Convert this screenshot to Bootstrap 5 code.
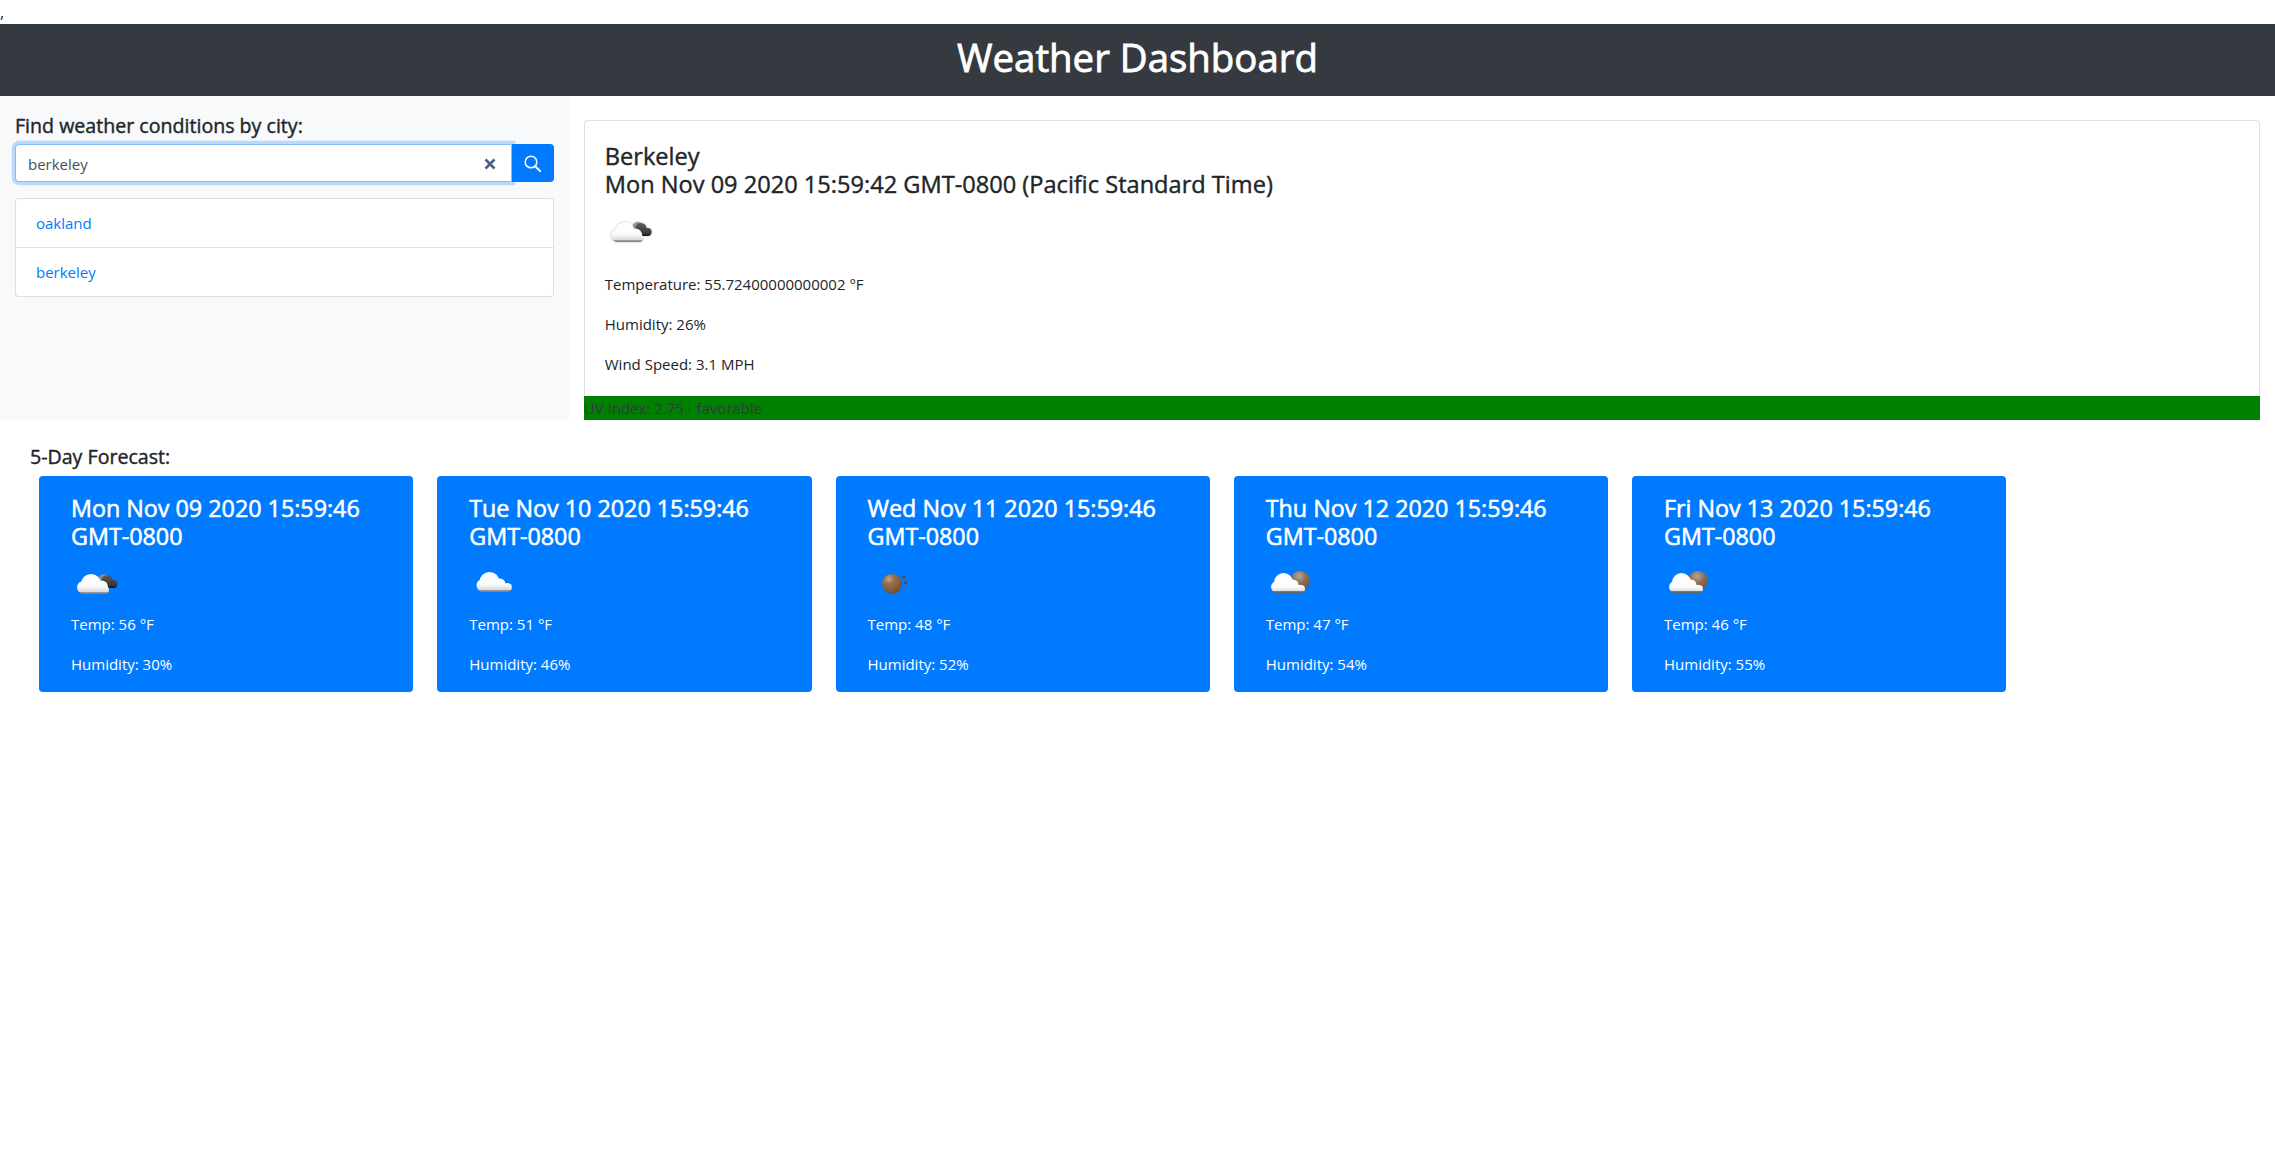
<!doctype html>
<html lang="en">
<head>
<meta charset="utf-8">
<title>Weather Dashboard</title>
<link href="https://cdn.jsdelivr.net/npm/bootstrap@5.3.0/dist/css/bootstrap.min.css" rel="stylesheet">
<style>
body{font-family:"Open Sans","Liberation Sans",sans-serif;font-size:15px;line-height:24px;color:#212529;background:#fff}
.stray{height:24px;font-size:16px;line-height:24px;margin:0}
.top-banner{height:72px;background:#343a40;color:#fff}
.top-banner h1{font-size:38.4px;font-weight:500;line-height:67px;margin:0;-webkit-text-stroke:.8px #fff}
.side-pane{background:#f8f9fa;padding:15px}
.find-label{font-size:19.6px;font-weight:500;line-height:29px;margin:0 0 4px;-webkit-text-stroke:.4px #212529}
.search-wrap{height:38px}
.search-field{position:relative;flex:1 1 auto}
.search-field .form-control{height:38px;border-radius:.25rem 0 0 .25rem;border-color:#80bdff;box-shadow:0 0 0 3.2px rgba(0,123,255,.25);color:#495057;font-size:15px;padding:7px 12px 5px}
.clear-x{position:absolute;right:16px;top:14px;width:12px;height:12px}
.go-btn{width:42px;height:38px;background:#007bff;border:0;border-radius:0 .25rem .25rem 0;padding:0 0 3px;color:#fff}
.city-list{margin-top:16px;border-radius:.25rem}
.city-list .list-group-item{padding:12px 20px;font-size:15px;line-height:24px;color:#007bff;text-decoration:none;border-color:rgba(0,0,0,.125)}
.main-pane{padding:24px 15px 0}
.now-card{border:1px solid rgba(0,0,0,.125);border-bottom:0;border-radius:.25rem .25rem 0 0;height:276px;padding:22px 20px 0}
.big-title{font-size:23.6px;font-weight:500;line-height:27.6px;margin:0;-webkit-text-stroke:.4px #212529}
.now-card .wx{display:block;margin:10px 0 14px;filter:drop-shadow(0 0 1px rgba(0,0,0,.28))}
.now-card p{margin:0 0 16px;line-height:24px}
.uv-bar{height:24px;background:green;color:#343a40;line-height:24px;font-size:15px;white-space:nowrap}
.forecast-wrap{padding:22px 0 0 30px}
.fc-head{font-size:19.6px;font-weight:500;line-height:29px;margin:0 0 5px;-webkit-text-stroke:.4px #212529}
.fc-row{margin-left:9px;gap:24px}
.fc-tile{width:374.25px;height:216px;background:#007bff;color:#fff;border:0;border-radius:.25rem;padding:19px 32px 0}
.fc-tile .big-title{font-size:23.3px;-webkit-text-stroke:.55px #fff}
.fc-tile .wx{display:block;margin:10px 0 2px}
.fc-tile p{margin:0 0 16px;line-height:24px}
.svg-bank{position:absolute;width:0;height:0;overflow:hidden}
</style>
</head>
<body>
<svg class="svg-bank" aria-hidden="true">
  <defs>
    <linearGradient id="wA" gradientUnits="userSpaceOnUse" x1="0" y1="14" x2="0" y2="34"><stop offset="0" stop-color="#fff"/><stop offset=".62" stop-color="#fbfbfb"/><stop offset=".9" stop-color="#d8d8d8"/><stop offset=".92" stop-color="#9a9a9a"/><stop offset="1" stop-color="#808080"/></linearGradient>
    <linearGradient id="wB" gradientUnits="userSpaceOnUse" x1="0" y1="12" x2="0" y2="32"><stop offset="0" stop-color="#fff"/><stop offset=".62" stop-color="#fbfbfb"/><stop offset=".9" stop-color="#d8d8d8"/><stop offset=".92" stop-color="#9a9a9a"/><stop offset="1" stop-color="#808080"/></linearGradient>
    <linearGradient id="wC" gradientUnits="userSpaceOnUse" x1="0" y1="13" x2="0" y2="33"><stop offset="0" stop-color="#fff"/><stop offset=".72" stop-color="#fbfbfb"/><stop offset=".9" stop-color="#ddd"/><stop offset=".92" stop-color="#8a7a6c"/><stop offset="1" stop-color="#6d6058"/></linearGradient>
    <linearGradient id="dk" gradientUnits="userSpaceOnUse" x1="0" y1="15" x2="0" y2="28"><stop offset="0" stop-color="#5c5c5c"/><stop offset=".8" stop-color="#383838"/><stop offset="1" stop-color="#111"/></linearGradient>
    <radialGradient id="mn" cx=".35" cy=".25" r=".85"><stop offset="0" stop-color="#c4a888"/><stop offset=".3" stop-color="#9a6f4e"/><stop offset="1" stop-color="#6e4a30"/></radialGradient>
    <radialGradient id="mn2" cx=".45" cy=".25" r=".85"><stop offset="0" stop-color="#b8a48f"/><stop offset=".45" stop-color="#8a6c50"/><stop offset="1" stop-color="#654e3a"/></radialGradient>
    <symbol id="i04" viewBox="0 0 50 50">
      <circle cx="33" cy="19.5" r="5.5" fill="#8f8f8f"/>
      <g fill="url(#dk)"><circle cx="36" cy="20.5" r="5.5"/><circle cx="42.5" cy="24" r="4"/><rect x="30" y="20" width="12" height="8"/></g>
      <g fill="url(#wA)"><circle cx="12.5" cy="27.5" r="6.5"/><circle cx="20" cy="24" r="10"/><circle cx="30.5" cy="27" r="6.5"/><circle cx="34" cy="30" r="4"/><rect x="12" y="26" width="22" height="8"/></g>
    </symbol>
    <symbol id="i03" viewBox="0 0 50 50">
      <g fill="url(#wB)"><circle cx="14" cy="25.5" r="6.5"/><circle cx="20.5" cy="22" r="10"/><circle cx="31" cy="24" r="5.5"/><circle cx="38.5" cy="27.5" r="4.5"/><rect x="14" y="24" width="25" height="8"/></g>
    </symbol>
    <symbol id="i01" viewBox="0 0 50 50">
      <circle cx="24" cy="24" r="10" fill="url(#mn)"/>
      <circle cx="36" cy="17" r="1.8" fill="#5c4a42"/><circle cx="37.5" cy="23" r="1.6" fill="#5c4a42"/>
    </symbol>
    <symbol id="i02" viewBox="0 0 50 50">
      <circle cx="34" cy="21" r="10" fill="url(#mn2)"/>
      <g fill="url(#wC)"><circle cx="11" cy="27" r="6"/><circle cx="17.5" cy="22.5" r="9.5"/><circle cx="27" cy="25" r="5.5"/><circle cx="35" cy="29" r="4"/><rect x="10.5" y="25" width="24.5" height="8"/></g>
    </symbol>
  </defs>
</svg>

<p class="stray">,</p>
<header class="top-banner text-center"><h1>Weather Dashboard</h1></header>

<div class="row g-0">
  <aside class="col-3 side-pane">
    <p class="find-label">Find weather conditions by city:</p>
    <div class="d-flex search-wrap">
      <div class="search-field">
        <input class="form-control" type="text" value="berkeley" aria-label="City">
        <svg class="clear-x" viewBox="0 0 12 12" aria-hidden="true"><path d="M1.5 1.5l9 9M10.5 1.5l-9 9" stroke="#4a5f8a" stroke-width="2.6" fill="none"/></svg>
      </div>
      <button class="go-btn" type="button" aria-label="Search">
        <svg width="17" height="17" viewBox="0 0 17 17" fill="none" stroke="#fff" aria-hidden="true"><circle cx="7" cy="7" r="5.8" stroke-width="1.5"/><path d="M11.2 11.2l4.8 4.8" stroke-width="2" stroke-linecap="round"/></svg>
      </button>
    </div>
    <div class="list-group city-list">
      <a class="list-group-item" href="#">oakland</a>
      <a class="list-group-item" href="#">berkeley</a>
    </div>
  </aside>
  <main class="col-9 main-pane">
    <section class="now-card">
      <h2 class="big-title">Berkeley<br>Mon Nov 09 2020 15:59:42 GMT-0800 (Pacific Standard Time)</h2>
      <svg class="wx" width="50" height="50"><use href="#i04"/></svg>
      <p>Temperature: 55.72400000000002 °F</p>
      <p>Humidity: 26%</p>
      <p>Wind Speed: 3.1 MPH</p>
    </section>
    <div class="uv-bar">UV Index: 2.75 - favorable</div>
  </main>
</div>

<section class="forecast-wrap">
  <p class="fc-head">5-Day Forecast:</p>
  <div class="d-flex fc-row">
    <div class="card fc-tile"><h3 class="big-title">Mon Nov 09 2020 15:59:46 GMT-0800</h3><svg class="wx" width="50" height="50"><use href="#i04"/></svg><p>Temp: 56 °F</p><p>Humidity: 30%</p></div>
    <div class="card fc-tile"><h3 class="big-title">Tue Nov 10 2020 15:59:46 GMT-0800</h3><svg class="wx" width="50" height="50"><use href="#i03"/></svg><p>Temp: 51 °F</p><p>Humidity: 46%</p></div>
    <div class="card fc-tile"><h3 class="big-title">Wed Nov 11 2020 15:59:46 GMT-0800</h3><svg class="wx" width="50" height="50"><use href="#i01"/></svg><p>Temp: 48 °F</p><p>Humidity: 52%</p></div>
    <div class="card fc-tile"><h3 class="big-title">Thu Nov 12 2020 15:59:46 GMT-0800</h3><svg class="wx" width="50" height="50"><use href="#i02"/></svg><p>Temp: 47 °F</p><p>Humidity: 54%</p></div>
    <div class="card fc-tile"><h3 class="big-title">Fri Nov 13 2020 15:59:46 GMT-0800</h3><svg class="wx" width="50" height="50"><use href="#i02"/></svg><p>Temp: 46 °F</p><p>Humidity: 55%</p></div>
  </div>
</section>
<script src="https://cdn.jsdelivr.net/npm/bootstrap@5.3.0/dist/js/bootstrap.bundle.min.js"></script>
</body>
</html>
